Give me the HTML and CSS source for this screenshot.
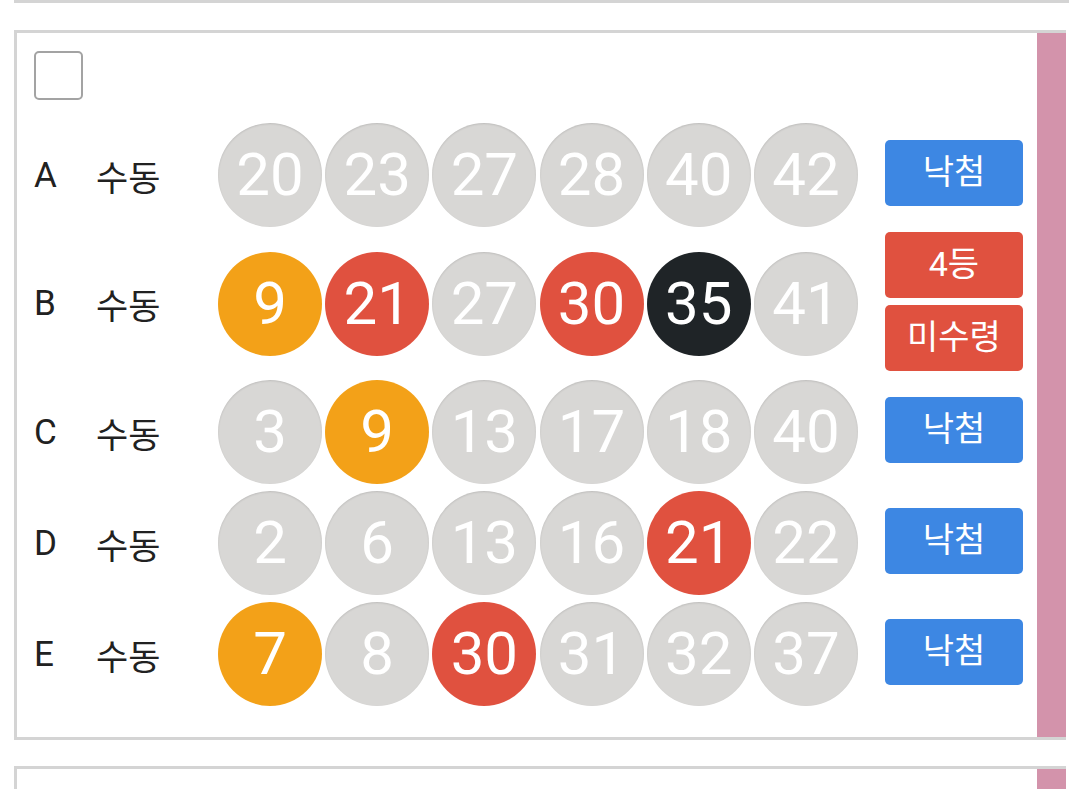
FILE: index.html
```html
<!DOCTYPE html>
<html lang="ko">
<head>
    <meta charset="UTF-8">
    <meta name="viewport" content="width=device-width, initial-scale=1.0">
    <title>로또 구매 내역</title>
    <link rel="stylesheet" href="styles.css">
</head>
<body>

<div class="ticket ticket-prev"></div>

<div class="ticket">
    <div class="ticket-body">
        <div class="check-box"></div>

        <div class="game-list">
            <div class="game-row">
                <span class="game-slot">A</span>
                <span class="game-type">수동</span>
                <div class="balls">
                    <span class="ball">20</span>
                    <span class="ball">23</span>
                    <span class="ball">27</span>
                    <span class="ball">28</span>
                    <span class="ball">40</span>
                    <span class="ball">42</span>
                </div>
                <div class="result">
                    <span class="badge badge-lose">낙첨</span>
                </div>
            </div>

            <div class="game-row">
                <span class="game-slot">B</span>
                <span class="game-type">수동</span>
                <div class="balls">
                    <span class="ball ball-yellow">9</span>
                    <span class="ball ball-red">21</span>
                    <span class="ball">27</span>
                    <span class="ball ball-red">30</span>
                    <span class="ball ball-black">35</span>
                    <span class="ball">41</span>
                </div>
                <div class="result">
                    <span class="badge badge-win">4등</span>
                    <span class="badge badge-win">미수령</span>
                </div>
            </div>

            <div class="game-row">
                <span class="game-slot">C</span>
                <span class="game-type">수동</span>
                <div class="balls">
                    <span class="ball">3</span>
                    <span class="ball ball-yellow">9</span>
                    <span class="ball">13</span>
                    <span class="ball">17</span>
                    <span class="ball">18</span>
                    <span class="ball">40</span>
                </div>
                <div class="result">
                    <span class="badge badge-lose">낙첨</span>
                </div>
            </div>

            <div class="game-row">
                <span class="game-slot">D</span>
                <span class="game-type">수동</span>
                <div class="balls">
                    <span class="ball">2</span>
                    <span class="ball">6</span>
                    <span class="ball">13</span>
                    <span class="ball">16</span>
                    <span class="ball ball-red">21</span>
                    <span class="ball">22</span>
                </div>
                <div class="result">
                    <span class="badge badge-lose">낙첨</span>
                </div>
            </div>

            <div class="game-row">
                <span class="game-slot">E</span>
                <span class="game-type">수동</span>
                <div class="balls">
                    <span class="ball ball-yellow">7</span>
                    <span class="ball">8</span>
                    <span class="ball ball-red">30</span>
                    <span class="ball">31</span>
                    <span class="ball">32</span>
                    <span class="ball">37</span>
                </div>
                <div class="result">
                    <span class="badge badge-lose">낙첨</span>
                </div>
            </div>
        </div>
    </div>
    <div class="ticket-mark"></div>
</div>

<div class="ticket">
    <div class="ticket-body ticket-body-empty"></div>
    <div class="ticket-mark"></div>
</div>

</body>
</html>
```

FILE: styles.css
```css
body {
    font-family: Roboto, "Noto Sans CJK KR", sans-serif;
    background-color: #fff;
    margin: 0;
    padding: 0 14px;
    color: #212121;
    overflow: hidden;
}
.ticket {
    display: flex;
    border: 3px solid #d4d4d4;
    border-right: none;
    margin-bottom: 26px;
    background: #fff;
}
.ticket-prev {
    height: 0;
    border-top: none;
    width: 1052px;
    margin-bottom: 27px;
}
.ticket-body {
    flex: 1;
    padding: 18px 0 31px 17px;
}
.ticket-body-empty {
    height: 200px;
}
.ticket-mark {
    width: 29px;
    background: #d393ab;
}
.check-box {
    width: 45px;
    height: 45px;
    border: 2px solid #a3a3a3;
    border-radius: 5px;
    margin-bottom: 23px;
}
.game-list {
    display: flex;
    flex-direction: column;
    gap: 7px;
}
.game-row {
    display: flex;
    align-items: center;
    font-size: 34px;
}
.game-slot {
    width: 62px;
    font-size: 35px;
}
.game-type {
    width: 122px;
    font-size: 35px;
}
.balls {
    display: flex;
    gap: 3.2px;
}
.ball {
    width: 104px;
    height: 104px;
    border-radius: 50%;
    background: #d8d7d5;
    color: #fff;
    font-size: 60px;
    line-height: 104px;
    text-align: center;
    box-sizing: border-box;
    box-shadow: inset 0 1px 2px rgba(0, 0, 0, 0.12);
}
.ball-yellow {
    background: #f3a118;
    box-shadow: none;
}
.ball-red {
    background: #e0513f;
    box-shadow: none;
}
.ball-black {
    background: #1f2427;
    box-shadow: none;
}
.result {
    display: flex;
    flex-direction: column;
    gap: 7px;
    margin-left: 27px;
    position: relative;
    top: -2px;
}
.badge {
    width: 138px;
    height: 66px;
    line-height: 64px;
    border-radius: 5px;
    color: #fff;
    text-align: center;
    font-size: 34px;
}
.badge-lose {
    background: #3d87e3;
}
.badge-win {
    background: #e0513f;
}
```
